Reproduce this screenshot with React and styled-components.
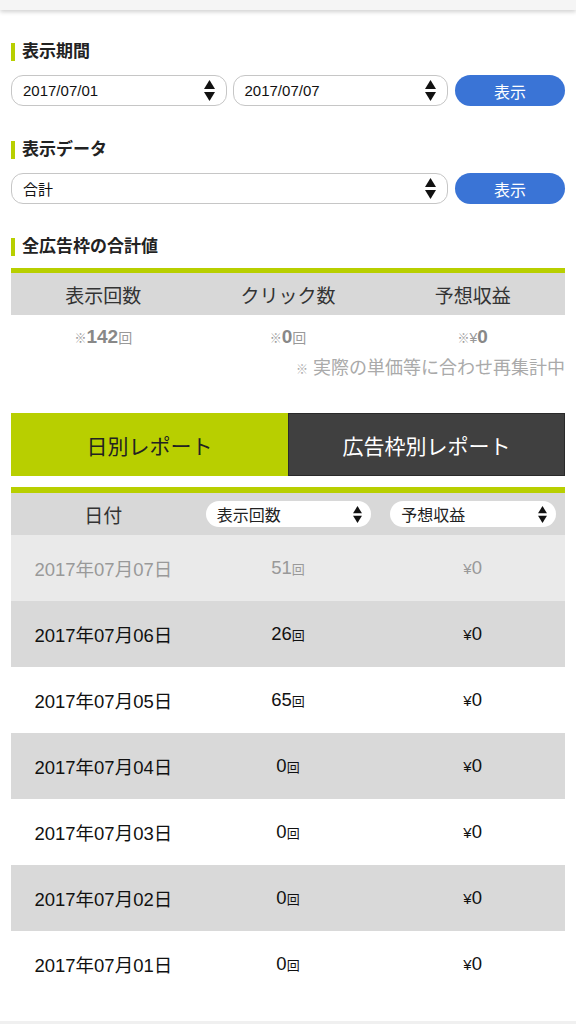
import React from "react";
import styled, { createGlobalStyle } from "styled-components";

const GREEN = "#b8cf00";
const BLUE = "#3a74d6";

const GlobalStyle = createGlobalStyle`
  body {
    margin: 0;
    background: #fff;
    font-family: "Liberation Sans", "Noto Sans CJK JP", sans-serif;
    color: #222;
  }
`;

const TopBar = styled.div`
  height: 10px;
  background: #f5f5f5;
  box-shadow: 0 2px 4px rgba(0, 0, 0, 0.18);
`;

const Main = styled.div`
  padding: 0 11px;
`;

const Section = styled.section`
  margin-top: ${(p) => p.top || 32}px;
`;

const Heading = styled.h2`
  margin: 0;
  height: 20px;
  display: flex;
  align-items: center;
  gap: 7px;
  font-size: 17px;
  font-weight: bold;
  color: #222;
  line-height: 20px;

  &::before {
    content: "";
    width: 4px;
    height: 18px;
    background: ${GREEN};
  }
`;

const FormRow = styled.div`
  margin-top: 13px;
  display: flex;
  gap: 6px;
`;

const SelectBox = styled.div`
  flex: 1;
  height: 31px;
  box-sizing: border-box;
  border: 1.5px solid #c6c6c6;
  border-radius: 12px;
  display: flex;
  align-items: center;
  justify-content: space-between;
  padding: 0 11px 0 11px;
  font-size: 15px;
  color: #111;
  background: #fff;
`;

const ShowButton = styled.button`
  width: 110px;
  margin-left: 1px;
  height: 31px;
  border: none;
  border-radius: 16px;
  background: ${BLUE};
  color: #fff;
  font-family: inherit;
  font-size: 16px;
  padding: 0;
`;

const Arrows = ({ w = 11, h = 21 }) => (
  <svg width={w} height={h} viewBox="0 0 11 21">
    <polygon points="5.5,0 11,9 0,9" fill="#111" />
    <polygon points="0,12 11,12 5.5,21" fill="#111" />
  </svg>
);

const SummaryTable = styled.div`
  margin-top: 11px;
  border-top: 5px solid ${GREEN};
`;

const Grid3 = styled.div`
  display: grid;
  grid-template-columns: 1fr 1fr 1fr;
  align-items: center;
  height: ${(p) => p.h}px;
  background: ${(p) => p.bg || "#fff"};
`;

const HeadCell = styled.div`
  text-align: center;
  font-size: ${(p) => p.size || 19}px;
  color: #333;
`;

const ValueCell = styled.div`
  text-align: center;
  color: #888;
  font-size: 19px;
  font-weight: bold;
`;

const Small = styled.span`
  font-size: ${(p) => p.size || 13}px;
  font-weight: normal;
  color: ${(p) => p.color || "#999"};
`;

const Note = styled.div`
  text-align: right;
  font-size: 18px;
  line-height: 18px;
  color: #aaa;
`;

const Tabs = styled.div`
  margin-top: 34px;
  display: grid;
  grid-template-columns: 1fr 1fr;
  height: 63px;
`;

const Tab = styled.div`
  display: flex;
  align-items: center;
  justify-content: center;
  font-size: 21px;
  background: ${(p) => (p.active ? GREEN : "#404040")};
  color: ${(p) => (p.active ? "#222" : "#fff")};
  border: ${(p) => (p.active ? "none" : "1px solid #2a2a2a")};
`;

const ReportTable = styled.div`
  margin-top: 11px;
  border-top: 6px solid ${GREEN};
`;

const Pill = styled.div`
  margin: 0 9px 0 10px;
  height: 26px;
  border-radius: 13px;
  background: #fff;
  display: flex;
  align-items: center;
  justify-content: space-between;
  padding: 0 9px 0 11px;
  font-size: 16px;
  color: #222;
`;

const Row = styled.div`
  display: grid;
  grid-template-columns: 1fr 1fr 1fr;
  align-items: center;
  height: 66px;
  background: ${(p) => p.bg};
  color: ${(p) => p.fg};
  font-size: 18.5px;
`;

const Cell = styled.div`
  text-align: center;
`;

const Footer = styled.div`
  margin-top: 24px;
  height: 3px;
  background: #f0f0f0;
`;

const rows = [
  ["2017年07月07日", "51", "0"],
  ["2017年07月06日", "26", "0"],
  ["2017年07月05日", "65", "0"],
  ["2017年07月04日", "0", "0"],
  ["2017年07月03日", "0", "0"],
  ["2017年07月02日", "0", "0"],
  ["2017年07月01日", "0", "0"],
];

export default function App() {
  return (
    <>
      <GlobalStyle />
      <TopBar />
      <Main>
        <Section>
          <Heading>表示期間</Heading>
          <FormRow>
            <SelectBox>
              2017/07/01
              <Arrows />
            </SelectBox>
            <SelectBox>
              2017/07/07
              <Arrows />
            </SelectBox>
            <ShowButton>表示</ShowButton>
          </FormRow>
        </Section>

        <Section top={34}>
          <Heading>表示データ</Heading>
          <FormRow>
            <SelectBox>
              合計
              <Arrows />
            </SelectBox>
            <ShowButton>表示</ShowButton>
          </FormRow>
        </Section>

        <Section top={33}>
          <Heading>全広告枠の合計値</Heading>
          <SummaryTable>
            <Grid3 h={42} bg="#d8d8d8">
              <HeadCell>表示回数</HeadCell>
              <HeadCell>クリック数</HeadCell>
              <HeadCell>予想収益</HeadCell>
            </Grid3>
            <Grid3 h={44}>
              <ValueCell>
                <Small size={12}>※</Small>142<Small size={14}>回</Small>
              </ValueCell>
              <ValueCell>
                <Small size={12}>※</Small>0<Small size={14}>回</Small>
              </ValueCell>
              <ValueCell>
                <Small size={12}>※</Small>
                <Small size={14}>¥</Small>0
              </ValueCell>
            </Grid3>
            <Note>
              <Small size={12} color="#aaa">※</Small> 実際の単価等に合わせ再集計中
            </Note>
          </SummaryTable>
        </Section>

        <Tabs>
          <Tab active>日別レポート</Tab>
          <Tab>広告枠別レポート</Tab>
        </Tabs>

        <ReportTable>
          <Grid3 h={42} bg="#d8d8d8">
            <HeadCell>日付</HeadCell>
            <Pill>
              表示回数
              <Arrows w={9} h={17} />
            </Pill>
            <Pill>
              予想収益
              <Arrows w={9} h={17} />
            </Pill>
          </Grid3>
          {rows.map(([date, count, yen], i) => (
            <Row
              key={date}
              bg={i === 0 ? "#eaeaea" : i % 2 === 1 ? "#d9d9d9" : "#fff"}
              fg={i === 0 ? "#999" : "#111"}
            >
              <Cell>{date}</Cell>
              <Cell>
                {count}
                <Small size={13} color="inherit">回</Small>
              </Cell>
              <Cell>
                <Small size={15} color="inherit">¥</Small>
                {yen}
              </Cell>
            </Row>
          ))}
        </ReportTable>
      </Main>
      <Footer />
    </>
  );
}
